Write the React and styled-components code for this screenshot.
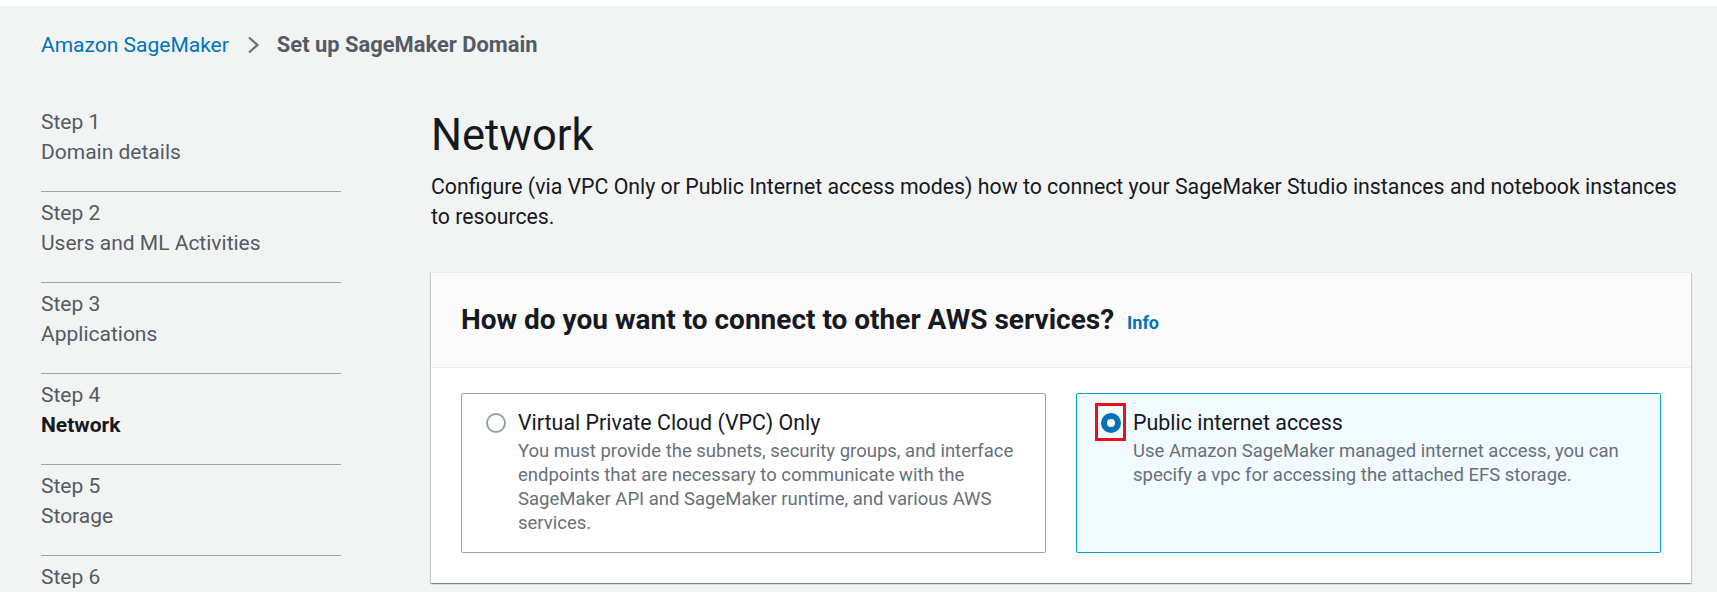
import styled, { createGlobalStyle } from "styled-components";

const GlobalStyle = createGlobalStyle`
  html, body {
    margin: 0;
    padding: 0;
    overflow: hidden;
    background: #f2f3f3;
    font-family: Roboto, "Liberation Sans", sans-serif;
    color: #16191f;
  }
  * { box-sizing: border-box; }
`;

const TopStrip = styled.div`
  height: 6px;
  background: #ffffff;
`;

const Page = styled.div`
  padding: 24px 26px 0 41px;
`;

const Breadcrumbs = styled.nav`
  display: flex;
  align-items: center;
  height: 30px;
  font-size: 21px;
  line-height: 30px;
`;

const Crumb = styled.span`
  color: ${(p) => (p.$current ? "#545b64" : "#0073bb")};
  font-weight: ${(p) => (p.$current ? 700 : 400)};
  font-size: ${(p) => (p.$current ? "21.9px" : "21px")};
`;

const Chevron = styled.svg`
  width: 13px;
  height: 18px;
  margin: 0 17px 0 18px;
`;

const Layout = styled.div`
  display: grid;
  grid-template-columns: 300px 1fr;
  column-gap: 90px;
  margin-top: 47px;
`;

const StepList = styled.ol`
  list-style: none;
  margin: 0;
  padding: 0;
`;

const StepItem = styled.li`
  padding: ${(p) => (p.$first ? "0" : "6px")} 0 24px;
  border-bottom: 1px solid #98a4a6;
  font-size: 21px;
  line-height: 30px;
  color: #545b64;
`;

const StepTitle = styled.div`
  color: ${(p) => (p.$active ? "#16191f" : "#545b64")};
  font-weight: ${(p) => (p.$active ? 700 : 400)};
`;

const Main = styled.main`
  min-width: 0;
`;

const Heading = styled.h1`
  margin: 4px 0 0;
  font-size: 43.5px;
  line-height: 50px;
  font-weight: 400;
  color: #16191f;
`;

const Description = styled.p`
  margin: 11px 0 0;
  font-size: 21.3px;
  line-height: 30px;
  color: #16191f;
`;

const Container = styled.section`
  margin-top: 40px;
  background: #ffffff;
  box-shadow: 0 1px 1px 0 rgba(0, 28, 36, 0.3),
    1px 1px 1px 0 rgba(0, 28, 36, 0.15), -1px 1px 1px 0 rgba(0, 28, 36, 0.15);
`;

const ContainerHeader = styled.div`
  display: flex;
  align-items: baseline;
  padding: 30px;
  background: #fafafa;
  border-bottom: 1px solid #eaeded;
  border-top: 1px solid #eaeded;
`;

const HeaderTitle = styled.h2`
  margin: 0;
  font-size: 28px;
  line-height: 34px;
  font-weight: 700;
  color: #16191f;
`;

const InfoLink = styled.a`
  margin-left: 13px;
  font-size: 18px;
  font-weight: 700;
  color: #0073bb;
  text-decoration: none;
`;

const ContainerBody = styled.div`
  display: grid;
  grid-template-columns: 1fr 1fr;
  gap: 30px;
  padding: 25px 30px 30px;
`;

const Tile = styled.label`
  display: flex;
  align-items: flex-start;
  padding: 12px 24px 17px 24px;
  border: 1px solid ${(p) => (p.$selected ? "#00a1c9" : "#98a4a6")};
  border-radius: 2px;
  background: ${(p) => (p.$selected ? "#f1faff" : "#ffffff")};
`;

const RadioWrap = styled.span`
  position: relative;
  flex: none;
  width: 20px;
  height: 20px;
  margin-top: 7px;
  margin-right: 12px;
`;

const RadioCircle = styled.span`
  display: block;
  width: 20px;
  height: 20px;
  border-radius: 50%;
  border: ${(p) => (p.$checked ? "6.5px solid #0073bb" : "2px solid #95a3a4")};
  background: #ffffff;
`;

const Highlight = styled.span`
  position: absolute;
  left: -6px;
  top: -10px;
  width: 31px;
  height: 38px;
  border: 3px solid #e3141b;
`;

const TileText = styled.div`
  display: flex;
  flex-direction: column;
`;

const TileLabel = styled.span`
  font-size: 21.4px;
  line-height: 33px;
  color: #16191f;
`;

const TileDesc = styled.span`
  font-size: 18.5px;
  line-height: 24px;
  color: #687078;
`;

const steps = [
  { n: 1, title: "Domain details" },
  { n: 2, title: "Users and ML Activities" },
  { n: 3, title: "Applications" },
  { n: 4, title: "Network", active: true },
  { n: 5, title: "Storage" },
  { n: 6 },
];

const options = [
  {
    id: "vpc",
    label: "Virtual Private Cloud (VPC) Only",
    desc: "You must provide the subnets, security groups, and interface endpoints that are necessary to communicate with the SageMaker API and SageMaker runtime, and various AWS services.",
  },
  {
    id: "public",
    label: "Public internet access",
    desc: "Use Amazon SageMaker managed internet access, you can specify a vpc for accessing the attached EFS storage.",
    selected: true,
  },
];

const App = () => {
  return (
    <>
      <GlobalStyle />
      <TopStrip />
      <Page>
        <Breadcrumbs>
          <Crumb>Amazon SageMaker</Crumb>
          <Chevron viewBox="0 0 13 18">
            <path
              d="M2 1.5 L10.5 9 L2 16.5"
              fill="none"
              stroke="#687078"
              strokeWidth="2.2"
            />
          </Chevron>
          <Crumb $current>Set up SageMaker Domain</Crumb>
        </Breadcrumbs>
        <Layout>
          <StepList>
            {steps.map((s, i) => (
              <StepItem key={s.n} $first={i === 0}>
                <div>Step {s.n}</div>
                {s.title && <StepTitle $active={s.active}>{s.title}</StepTitle>}
              </StepItem>
            ))}
          </StepList>
          <Main>
            <Heading>Network</Heading>
            <Description>
              Configure (via VPC Only or Public Internet access modes) how to
              connect your SageMaker Studio instances and notebook instances to
              resources.
            </Description>
            <Container>
              <ContainerHeader>
                <HeaderTitle>
                  How do you want to connect to other AWS services?
                </HeaderTitle>
                <InfoLink href="#">Info</InfoLink>
              </ContainerHeader>
              <ContainerBody>
                {options.map((o) => (
                  <Tile key={o.id} $selected={o.selected}>
                    <RadioWrap>
                      <RadioCircle $checked={o.selected} />
                      {o.selected && <Highlight />}
                    </RadioWrap>
                    <TileText>
                      <TileLabel>{o.label}</TileLabel>
                      <TileDesc>{o.desc}</TileDesc>
                    </TileText>
                  </Tile>
                ))}
              </ContainerBody>
            </Container>
          </Main>
        </Layout>
      </Page>
    </>
  );
};

export default App;
